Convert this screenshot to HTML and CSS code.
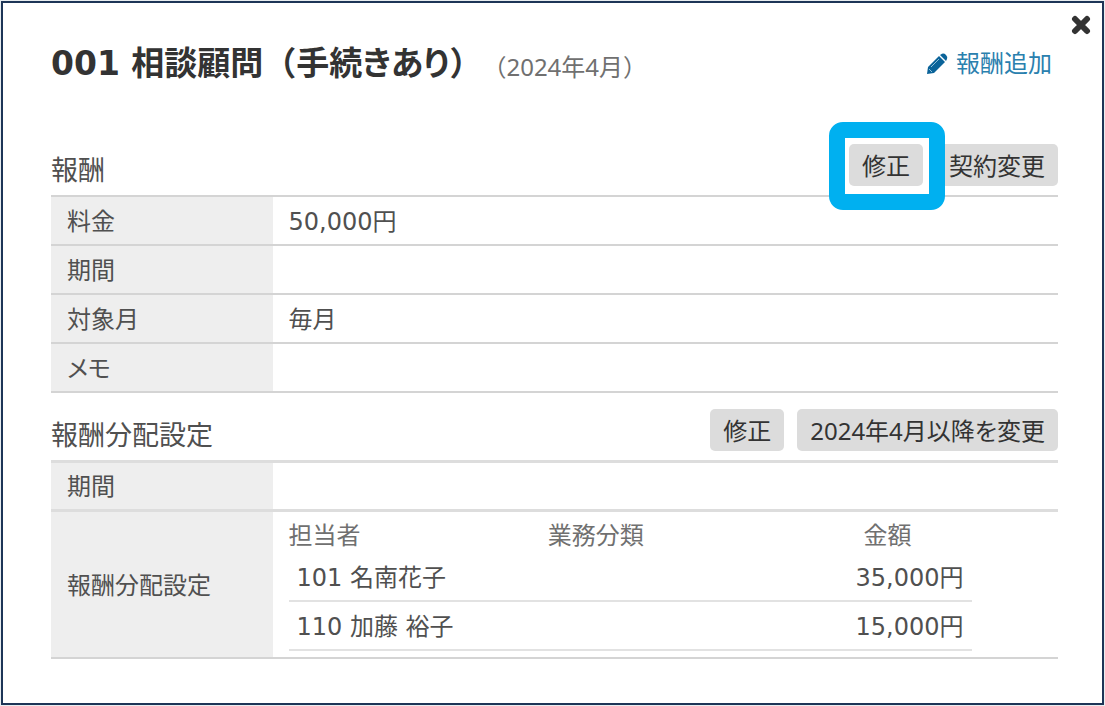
FILE: index.html
```html
<!DOCTYPE html>
<html lang="ja">
<head>
    <meta charset="UTF-8">
    <meta name="viewport" content="width=device-width, initial-scale=1.0">
    <title>相談顧問（手続きあり）</title>
    <link rel="stylesheet" href="styles.css">
</head>
<body>
    <main class="dialog">
        <button class="close" type="button" aria-label="閉じる">
            <svg width="20" height="20" viewBox="0 0 20 20"><path d="M4 4L16 16M16 4L4 16"/></svg>
        </button>

        <header class="dialog-header">
            <h1>001 相談顧問（手続<span class="kana">きあり</span>）</h1>
            <span class="month">（2024年4月）</span>
            <a class="add-link" href="#">
                <svg width="22" height="22" viewBox="0 0 22 22">
                    <path d="M1 21L2 14L13 3L19 9L8 20Z"/>
                    <path d="M14 2L16 0.8Q18 0 20 2Q22 4 21 6L20 8Z"/>
                    <path class="shine" d="M5 14L13 6M3 16L6 19"/>
                </svg>
                報酬追加
            </a>
        </header>

        <section class="fee">
            <div class="section-head">
                <h2>報酬</h2>
                <div class="actions">
                    <span class="highlight"><button class="btn" type="button">修正</button></span>
                    <button class="btn" type="button">契約変更</button>
                </div>
            </div>
            <table class="detail">
                <tr><th scope="row">料金</th><td>50,000円</td></tr>
                <tr><th scope="row">期間</th><td></td></tr>
                <tr><th scope="row">対象月</th><td>毎月</td></tr>
                <tr><th scope="row"><span class="kana">メモ</span></th><td></td></tr>
            </table>
        </section>

        <section class="share">
            <div class="section-head">
                <h2>報酬分配設定</h2>
                <div class="actions">
                    <button class="btn" type="button">修正</button>
                    <button class="btn" type="button">2024年4月以降<span class="kana">を</span>変更</button>
                </div>
            </div>
            <table class="detail detail-share">
                <tr><th scope="row">期間</th><td></td></tr>
                <tr>
                    <th scope="row">報酬分配設定</th>
                    <td>
                        <table class="members">
                            <thead>
                                <tr><th class="name">担当者</th><th class="kind">業務分類</th><th class="amount">金額</th></tr>
                            </thead>
                            <tbody>
                                <tr><td>101 名南花子</td><td></td><td class="amount">35,000円</td></tr>
                                <tr><td>110 加藤 裕子</td><td></td><td class="amount">15,000円</td></tr>
                            </tbody>
                        </table>
                    </td>
                </tr>
            </table>
        </section>
    </main>
</body>
</html>
```
FILE: styles.css
```css
* {
    box-sizing: border-box;
}
body {
    margin: 0;
    padding: 1px;
    background: #e8edf0;
    color: #505050;
    font-family: "DejaVu Sans", "Noto Sans CJK JP", sans-serif;
    font-size: 24px;
    line-height: 34px;
}
.dialog {
    position: relative;
    min-height: calc(100vh - 2px);
    padding: 37px 44px 40px 48px;
    border: 2px solid #1d3557;
    background: #fff;
}
.kana {
    font-feature-settings: "palt";
}

/* header */
.close {
    position: absolute;
    top: 12px;
    right: 11px;
    padding: 0;
    border: 0;
    background: none;
    line-height: 0;
    cursor: pointer;
}
.close path {
    stroke: #333;
    stroke-width: 6;
    stroke-linecap: round;
}
.dialog-header {
    display: flex;
    align-items: center;
    height: 48px;
}
h1 {
    margin: 0;
    color: #333;
    font-size: 33px;
    line-height: 48px;
    white-space: nowrap;
}
.month {
    padding-top: 6px;
    color: #707070;
    font-family: "Noto Sans", "Noto Sans CJK JP", sans-serif;
    white-space: nowrap;
}
.add-link {
    display: flex;
    align-items: center;
    gap: 8px;
    margin-left: auto;
    padding-right: 6px;
    color: #2a80ae;
    text-decoration: none;
}
.add-link svg {
    fill: #0a6399;
}
.add-link .shine {
    fill: none;
    stroke: #8fc0da;
    stroke-width: 1;
}

/* sections */
.fee {
    margin-top: 56px;
}
.share {
    margin-top: 16px;
}
.section-head {
    display: flex;
    justify-content: space-between;
    align-items: flex-end;
    padding-bottom: 9px;
}
h2 {
    margin: 0;
    font-size: 27px;
    font-weight: 400;
    line-height: 30px;
}
.actions {
    display: flex;
    gap: 13px;
}
.btn {
    display: block;
    height: 42px;
    padding: 2px 13px 0;
    border: 0;
    border-radius: 5px;
    background: #dcdcdc;
    color: #333;
    font: inherit;
    font-family: "Noto Sans", "Noto Sans CJK JP", sans-serif;
    cursor: pointer;
}
.highlight {
    position: relative;
}
.highlight::after {
    content: '';
    position: absolute;
    inset: -22px -22px -24px -20px;
    border: 16px solid #00b0f0;
    border-radius: 14px;
    pointer-events: none;
}

/* tables */
table {
    border-collapse: separate;
    border-spacing: 0;
}
th, td {
    text-align: left;
    font-weight: 400;
}
.detail {
    width: 100%;
    border-top: 2px solid #d4d4d4;
}
.detail > tbody > tr > th,
.detail > tbody > tr > td {
    height: 49px;
    padding: 2px 16px 0;
    border-bottom: 2px solid #d4d4d4;
}
.detail > tbody > tr > th {
    width: 22%;
    background: #eee;
}
.detail-share {
    border-top: 3px solid #ddd;
}
.detail-share > tbody > tr:first-child > * {
    border-bottom: 3px solid #ddd;
}
.detail-share > tbody > tr:last-child > td {
    padding: 7px 16px 6px;
}
.members {
    width: 100%;
    max-width: 683px;
    white-space: nowrap;
}
.members th {
    height: 34px;
    padding: 0;
    color: #707070;
}
.members td {
    height: 49px;
    padding: 2px 8px 0;
    border-bottom: 2px solid #e2e2e2;
}
.members .name {
    width: 38%;
}
.members .kind {
    width: 44%;
}
.members th.amount {
    padding-left: 16px;
}
.members td.amount {
    text-align: right;
}
```
